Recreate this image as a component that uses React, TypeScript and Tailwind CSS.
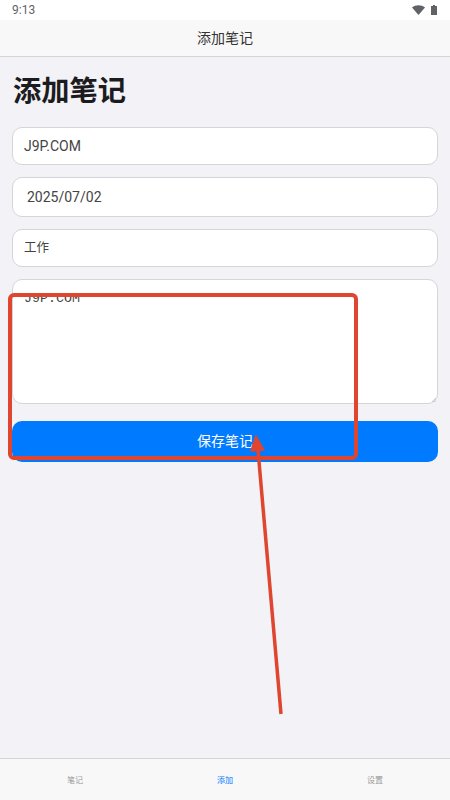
const cjk = "font-['Roboto','Noto_Sans_CJK_SC',sans-serif]";

function Field({ children, className }: { children: React.ReactNode; className: string }) {
  return (
    <div className={`flex items-center bg-white border border-[#d5d5d9] rounded-[10px] text-[#444] ${className}`}>
      {children}
    </div>
  );
}

export default function App() {
  return (
    <div className={`relative w-[450px] h-[800px] overflow-hidden flex flex-col bg-[#f2f2f7] ${cjk}`}>
      <div className="h-[20px] bg-white flex items-center justify-between pl-[12px] pr-[13px]">
        <span className="text-[12px] text-[#5f6368]">9:13</span>
        <div className="flex items-center gap-[6px]">
          <svg width="13" height="10" viewBox="0 0 13 10"><path d="M0 2.5 C3.5 -0.5 9.5 -0.5 13 2.5 L6.5 10 Z" fill="#5f6368" /></svg>
          <svg width="6" height="10" viewBox="0 0 6 10"><path d="M2 0h2v1h2v9H0V1h2z" fill="#5f6368" /></svg>
        </div>
      </div>
      <div className="h-[37px] bg-[#f8f8f8] border-b border-[#d4d4d6] flex items-center justify-center text-[14px] text-[#333]">
        添加笔记
      </div>
      <div className="flex-1 flex flex-col px-[12px]">
        <h1 className="mt-[16px] h-[38px] pl-[1px] flex items-center text-[28.25px] leading-none font-bold text-[#1c1c1e]">添加笔记</h1>
        <Field className="mt-[16px] h-[38px] pl-[11px] text-[14px]">J9P.COM</Field>
        <Field className="mt-[12px] h-[40px] pl-[14px] text-[14px]">2025/07/02</Field>
        <Field className="mt-[12px] h-[38px] pl-[11px] text-[12.5px]">工作</Field>
        <div className="relative mt-[12px] h-[125px] bg-white border border-[#d5d5d9] rounded-[10px] pl-[11px] pt-[11px] text-[13.3px] leading-[16px] text-[#444] font-['Liberation_Mono',monospace]">
          J9P.COM
          <svg className="absolute right-[1px] bottom-[1px]" width="5" height="5" viewBox="0 0 6 6"><path d="M1 6 6 1M4 6 6 4" stroke="#aaa" strokeWidth="0.8" /></svg>
        </div>
        <button className="mt-[17px] h-[41px] rounded-[10px] bg-[#007aff] text-white text-[14px]">保存笔记</button>
      </div>
      <div className="h-[42px] bg-[#f8f8f8] border-t border-[#d4d4d6] grid grid-cols-3 pt-[2px] text-[8px] text-[#999]">
        <div className="flex items-center justify-center">笔记</div>
        <div className="flex items-center justify-center text-[#007aff]">添加</div>
        <div className="flex items-center justify-center">设置</div>
      </div>
      <div className="absolute left-[8px] top-[293px] w-[350px] h-[167px] border-[4px] border-[#e0452f] rounded-[6px]" />
      <svg className="absolute left-0 top-0 pointer-events-none" width="450" height="800" viewBox="0 0 450 800">
        <path d="M281 714 L258 450" stroke="#e0452f" strokeWidth="3.5" fill="none" />
        <path d="M256 436 L251 451 L264 450 Z" fill="#e0452f" stroke="#e0452f" strokeWidth="1.5" strokeLinejoin="round" />
      </svg>
    </div>
  );
}
